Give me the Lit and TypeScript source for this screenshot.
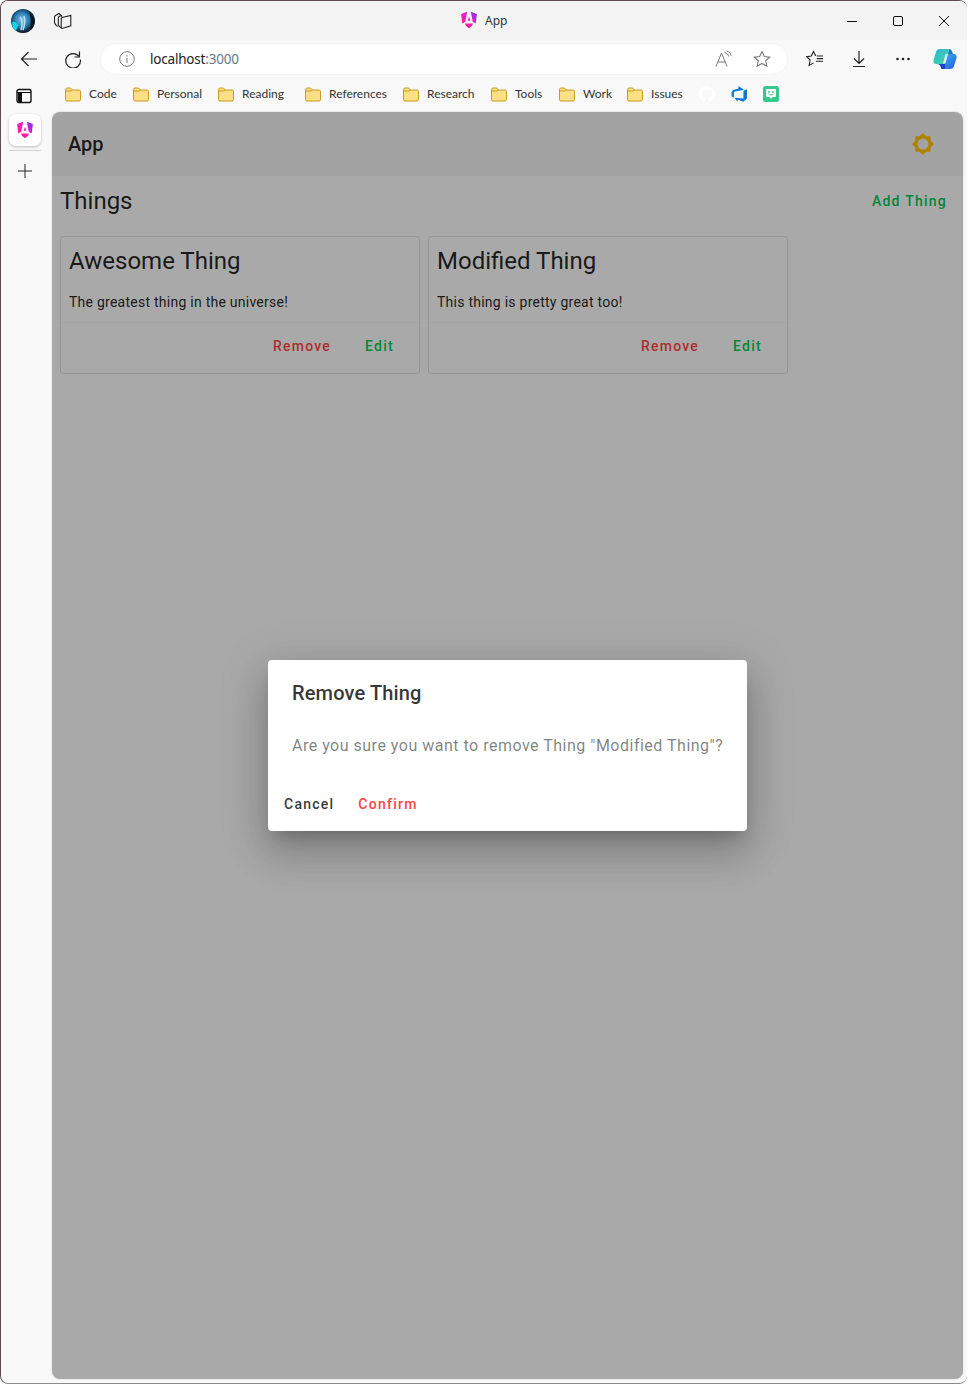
import { LitElement, html, css } from "lit";
import { customElement } from "lit/decorators.js";

const angular = (id: string, size: number) => html`<svg width=${size} height=${size} viewBox="0 0 24 24">
  <defs><linearGradient id=${id} x1="0" y1="1" x2="1" y2="0"><stop offset="0" stop-color="#ff1a5e"/><stop offset=".5" stop-color="#f01fc8"/><stop offset="1" stop-color="#7a2cf0"/></linearGradient></defs>
  <path fill="url(#${id})" d="M9.600 1 1.500 4l1.500 12.500 4-2.200L9.600 1ZM14.400 1 17 14.300l4 2.200L22.500 4 14.400 1ZM12 7.500l-1.900 5.500h3.800L12 7.500ZM6.800 16.500l1 3.200L12 23l4.200-3.300 1-3.200H6.800Z"/>
</svg>`;

const folder = html`<svg class="folder" width="16" height="16" viewBox="0 0 16 16">
  <path d="M.5 3.500A1.500 1.500 0 0 1 2 2h3.500l2 2H14A1.500 1.500 0 0 1 15.500 5.500v8A1.500 1.500 0 0 1 14 15H2A1.500 1.500 0 0 1 .5 13.500Z" fill="#ffdf85" stroke="#c99a1e"/>
  <path d="M.5 5H6l1.500-1" fill="none" stroke="#c99a1e"/>
</svg>`;

const BOOKMARKS = [
  { name: "Code", w: 28 },
  { name: "Personal", w: 45 },
  { name: "Reading", w: 47 },
  { name: "References", w: 58 },
  { name: "Research", w: 48 },
  { name: "Tools", w: 28 },
  { name: "Work", w: 28 },
  { name: "Issues", w: 32 },
];
const THINGS = [
  { title: "Awesome Thing", body: "The greatest thing in the universe!" },
  { title: "Modified Thing", body: "This thing is pretty great too!" },
];

@customElement("app-root")
export class AppRoot extends LitElement {
  static styles = css`
    :host { display: block; width: 968px; height: 1384px; background: #fff; overflow: hidden; font-family: Roboto, sans-serif; }
    * { box-sizing: border-box; }
    svg { display: block; flex: none; }
    .window { position: relative; width: 967px; height: 1384px; display: flex; flex-direction: column; background: #f9f9f9;
      border: solid #5c4c53; border-width: 1px 0 1px 1px; border-bottom-color: #8a8a8a; border-radius: 8px; overflow: hidden; }
    .titlebar { height: 39px; background: #f3f3f3; display: flex; align-items: center; flex: none; position: relative; }
    .avatar { margin-left: 10px; width: 24px; height: 24px; }
    .tabs-ico { margin-left: 19px; }
    .tab { position: absolute; left: 459px; top: 10px; display: flex; align-items: center; gap: 7px; font: 12px "Noto Sans", sans-serif; color: #333; height: 18px; }
    .winbtns { margin-left: auto; display: flex; }
    .winbtns div { width: 46px; display: flex; justify-content: center; }
    .toolbar { height: 38px; display: flex; align-items: center; flex: none; }
    .back { margin-left: 19px; }
    .reload { margin-left: 26px; }
    .url { margin-left: 19px; width: 686px; height: 30px; border-radius: 15px; background: #fff; display: flex; align-items: center; padding-left: 18px; box-shadow: 0 0 2px rgba(0,0,0,.06); }
    .addr { margin-left: 15px; font: 13.500px "Noto Sans", sans-serif; letter-spacing: -.2px; color: #222; }
    .addr span { color: #67788a; }
    .url .aloud { margin-left: auto; }
    .url .star { margin: 0 16px 0 20px; }
    .fav { margin-left: 19px; }
    .dl { margin-left: 26px; }
    .more { margin-left: 26px; }
    .copilot { margin-left: 21px; }
    .lower { flex: 1; display: flex; min-height: 0; }
    .side { width: 51px; flex: none; display: flex; flex-direction: column; align-items: center; padding-top: 10px; }
    .side .panel { margin-left: -5px; }
    .apptab { margin: 10px 0 0 -3px; width: 32px; height: 32px; border-radius: 7px; background: #fff; box-shadow: 0 1px 3px rgba(0,0,0,.25); display: flex; align-items: center; justify-content: center; }
    .divider { margin: 4px 0 0 -3px; width: 32px; height: 1px; background: #d2d2d2; }
    .plus { margin: 12px 0 0 -3px; }
    .right { flex: 1; display: flex; flex-direction: column; min-width: 0; }
    .bookmarks { height: 34px; padding-bottom: 2px; display: flex; align-items: center; flex: none; font: 12px Lato, sans-serif; color: #333; }
    .bm { display: flex; align-items: center; gap: 8px; margin-left: 16px; }
    .bm:first-child { margin-left: 13px; }
    .bm span { padding-bottom: 2px; white-space: nowrap; }
    .apps { display: flex; gap: 16px; margin-left: 16px; }
    .page { position: relative; height: 1267px; width: 911px; border-radius: 8px; background: #fafafa; overflow: hidden; box-shadow: 0 0 2px rgba(0,0,0,.2); }
    .appbar { height: 64px; background: #f0f0f0; padding: 0 16px; display: flex; align-items: center; justify-content: space-between; font-size: 20px; font-weight: 500; color: rgba(0,0,0,.87); }
    .sun { margin-right: 12px; }
    .content { padding: 8px; }
    .head { display: flex; align-items: center; justify-content: space-between; height: 34px; margin-bottom: 18px; }
    .head h1 { margin: 0; font-size: 24px; font-weight: 400; color: rgba(0,0,0,.87); }
    .btn { font: 500 14px Roboto, sans-serif; letter-spacing: 1.250px; background: none; border: 0; padding: 0 8px; height: 36px; color: #00c853; }
    .btn.del { color: #ff4444; }
    .cards { display: flex; gap: 8px; }
    .card { width: 360px; height: 138px; background: #fafafa; border: 1px solid rgba(0,0,0,.12); border-radius: 4px; display: flex; flex-direction: column; }
    .body { padding: 8px; height: 86px; border-bottom: 1px solid rgba(0,0,0,.03); }
    .card h2 { margin: 0; font-size: 24px; font-weight: 400; line-height: 32px; color: rgba(0,0,0,.87); }
    .card p { margin: 15px 0 0; font-size: 14px; line-height: 20px; color: rgba(0,0,0,.87); letter-spacing: .25px; }
    .actions { display: flex; justify-content: flex-end; gap: 18px; padding: 0 17px 4px 0; align-items: center; flex: 1; }
    .scrim { position: absolute; inset: 0; background: rgba(0,0,0,.32); display: flex; align-items: center; justify-content: center; }
    .dialog { width: 479px; height: 171px; background: #fff; border-radius: 4px; box-shadow: 0 11px 15px -7px rgba(0,0,0,.2), 0 24px 38px 3px rgba(0,0,0,.14), 0 9px 46px 8px rgba(0,0,0,.12); display: flex; flex-direction: column; }
    .dialog h3 { margin: 0; padding: 19px 24px 0; font-size: 20px; font-weight: 500; line-height: 28px; letter-spacing: .15px; color: rgba(0,0,0,.8); }
    .dialog p { margin: 0; padding: 27px 24px 0; font-size: 16px; line-height: 24px; letter-spacing: .5px; color: rgba(0,0,0,.5); white-space: nowrap; }
    .dialog .foot { margin-top: auto; display: flex; padding: 0 8px 9px; gap: 8px; }
    .btn.cancel { color: rgba(0,0,0,.8); }
  `;

  render() {
    return html`<div class="window">
      <div class="titlebar">
        <svg class="avatar" viewBox="0 0 24 24">
          <defs><radialGradient id="av" cx=".45" cy=".45" r=".55"><stop offset="0" stop-color="#7cc4ea"/><stop offset=".55" stop-color="#2a7eb5"/><stop offset="1" stop-color="#05101c"/></radialGradient></defs>
          <circle cx="12" cy="12" r="12" fill="url(#av)"/>
          <path d="M1 13c3-1 5 1 6 3l-2 6c-3-2-4-5-4-9Z" fill="#12d5ea"/>
          <path d="M9 8c2 2 3 6 1 13M13 7c1 4 1 9-1 14" stroke="#bfe2ef" stroke-width="1.500" fill="none"/>
          <path d="M18 3c4 3 6 8 5 13l-5 6c3-7 2-13 0-19Z" fill="#08131d"/>
        </svg>
        <svg class="tabs-ico" width="18" height="18" viewBox="0 0 18 18" fill="none" stroke="#222" stroke-width="1.100">
          <path d="M8 4.500 5 1.500 1.500 3.500c-.8.500-1 1-1 2v4.500c0 1 .5 2 1.300 2.800L3.500 14.500"/>
          <path d="M8 3.500 5.500 4.200c-.8.300-1.200.8-1.200 1.700v6c0 1 .5 2 1.300 2.800l1.200 1.300"/>
          <path d="M8 5.500 16.800 3.500v10.300L8 16.500c-.5-.5-.8-1-.8-1.700V6.800c0-.5.300-1 .8-1.300Z"/>
        </svg>
        <div class="tab">${angular("g1", 18)}<span>App</span></div>
        <div class="winbtns">
          <div><svg width="12" height="12" viewBox="0 0 12 12"><path d="M1 6.500h10" stroke="#111" fill="none"/></svg></div>
          <div><svg width="12" height="12" viewBox="0 0 12 12"><rect x="1.500" y="1.500" width="9" height="9" rx="1.500" stroke="#111" fill="none"/></svg></div>
          <div><svg width="12" height="12" viewBox="0 0 12 12"><path d="M1 1l10 10M11 1 1 11" stroke="#111" fill="none"/></svg></div>
        </div>
      </div>
      <div class="toolbar">
        <svg class="back" width="18" height="18" viewBox="0 0 18 18" fill="none" stroke="#222" stroke-width="1.200"><path d="M17 9H1.500M8.500 2 1.500 9l7 7"/></svg>
        <svg class="reload" width="18" height="18" viewBox="0 0 18 18" fill="none" stroke="#222" stroke-width="1.200"><path d="M15 6.500A7.300 7.300 0 1 0 16.300 9.500"/><path d="M15.500 1.500V7H10.500"/></svg>
        <div class="url">
          <svg width="16" height="16" viewBox="0 0 16 16" fill="none" stroke="#777"><circle cx="8" cy="8" r="7.300"/><path d="M8 7v5M8 4.200v1.300"/></svg>
          <div class="addr">localhost<span>:3000</span></div>
          <svg class="aloud" width="18" height="18" viewBox="0 0 18 18" fill="none" stroke="#777" stroke-width="1"><path d="M1 16.500 6.500 3 12 16.500M3 12h7"/><path d="M9.500 1.500c2 .3 3.800 2 4.200 4M11.500 0c2.500.500 4.300 2.500 4.700 4.800" transform="translate(0 1)"/></svg>
          <svg class="star" width="18" height="18" viewBox="0 0 18 18" fill="none" stroke="#777" stroke-width="1.100"><path d="m9 1.500 2.300 5 5.400.6-4 3.700 1.100 5.400L9 13.500l-4.800 2.700 1.100-5.400-4-3.700 5.400-.6Z"/></svg>
        </div>
        <svg class="fav" width="18" height="18" viewBox="0 0 18 18" fill="none" stroke="#222" stroke-width="1.100"><path d="M9.800 6 7.500 1.500 5.300 6 .8 6.700l3.300 3.300-1 5.500 4.400-2.600"/><path d="M10.800 6h6.200M10.800 8.600h6.200M10 11.300h7"/></svg>
        <svg class="dl" width="18" height="18" viewBox="0 0 18 18" fill="none" stroke="#222" stroke-width="1.200"><path d="M9 1v12M4 8.500 9 13.500l5-5M3 16.500h12"/></svg>
        <svg class="more" width="18" height="18" viewBox="0 0 18 18" fill="#222"><circle cx="3.500" cy="9" r="1.300"/><circle cx="9" cy="9" r="1.300"/><circle cx="14.500" cy="9" r="1.300"/></svg>
        <svg class="copilot" width="24" height="24" viewBox="0 0 24 24">
          <defs>
            <linearGradient id="c1" x1="0" y1="0" x2="1" y2="1"><stop offset="0" stop-color="#27b4d8"/><stop offset="1" stop-color="#4dd89a"/></linearGradient>
            <linearGradient id="c2" x1="0" y1="0" x2="1" y2="1"><stop offset="0" stop-color="#35b8f5"/><stop offset="1" stop-color="#2a5ae0"/></linearGradient>
          </defs>
          <path d="M7 2h9l-4 15H3.500C1 17 0 15.500.600 13L3 5c.5-2 2-3 4-3Z" fill="url(#c1)"/>
          <path d="M16 2c1.500 0 2.500 1 3 2.500L20 7h-5Z" fill="#1878b8"/>
          <path d="M13 7h7.500c2.500 0 3.500 1.500 3 4l-2.500 8c-.5 2-2 3-4 3H8c2 0 3-1 3.500-3Z" fill="url(#c2)"/>
          <path d="M12 17H4c3 0 4 3 4.500 5H11c1 0 1.500-2 1-5Z" fill="#2040c8"/>
          <path d="M12.500 7H15l-2.500 9.500H10Z" fill="#fff" opacity=".8"/>
        </svg>
      </div>
      <div class="lower">
        <div class="side">
          <svg class="panel" width="16" height="16" viewBox="0 0 16 16"><rect x="1" y="1.500" width="14" height="13" rx="2" fill="#fff" stroke="#111" stroke-width="1.400"/><path d="M1 4.500h14" stroke="#111"/><path d="M2 5h4v9H3a1 1 0 0 1-1-1Z" fill="#111"/></svg>
          <div class="apptab">${angular("g2", 18)}</div>
          <div class="divider"></div>
          <svg class="plus" width="16" height="16" viewBox="0 0 16 16"><path d="M8 1v14M1 8h14" stroke="#222" fill="none"/></svg>
        </div>
        <div class="right">
          <div class="bookmarks">
            ${BOOKMARKS.map((b) => html`<div class="bm">${folder}<span style="width:${b.w}px">${b.name}</span></div>`)}
            <div class="apps">
              <svg width="16" height="16" viewBox="0 0 16 16"><path fill="#fff" d="M8 0C3.580 0 0 3.580 0 8c0 3.540 2.290 6.530 5.470 7.590.4.070.55-.17.55-.38 0-.19-.01-.82-.01-1.490-2.010.37-2.530-.49-2.690-.94-.09-.23-.48-.94-.82-1.130-.28-.15-.68-.52-.01-.53.63-.01 1.080.58 1.230.82.72 1.210 1.870.87 2.330.66.07-.52.28-.87.51-1.070-1.780-.2-3.640-.89-3.640-3.950 0-.87.31-1.590.82-2.150-.08-.2-.36-1.020.08-2.120 0 0 .67-.21 2.200.82.64-.18 1.320-.27 2-.27.68 0 1.360.09 2 .27 1.530-1.040 2.200-.82 2.200-.82.44 1.100.16 1.920.08 2.120.51.56.82 1.270.82 2.150 0 3.070-1.870 3.750-3.650 3.950.29.25.54.73.54 1.480 0 1.070-.01 1.930-.01 2.200 0 .21.15.46.55.38A8.013 8.013 0 0 0 16 8c0-4.420-3.580-8-8-8Z"/></svg>
              <svg width="16" height="16" viewBox="0 0 16 16"><path d="M16 3.200v9.400l-3.600 3.200-5.800-2.200v2.200L3.400 11.800l9 .7V4.700ZM13 3.700 7.500 0v2.400L2.200 4 .6 6v4.500l2.300 1V5.700Z" fill="#0a78d6"/></svg>
              <svg width="16" height="16" viewBox="0 0 16 16"><rect width="16" height="16" rx="2.500" fill="#35c98e"/><path d="M4 3h8a1 1 0 0 1 1 1v6a1 1 0 0 1-1 1h-2.500L8 13l-1.500-2H4a1 1 0 0 1-1-1V4a1 1 0 0 1 1-1Z" fill="#fff"/><circle cx="6" cy="6" r=".9" fill="#35c98e"/><circle cx="10" cy="6" r=".9" fill="#35c98e"/><path d="M5.500 8c1 1.300 4 1.300 5 0" stroke="#35c98e" fill="none"/></svg>
            </div>
          </div>
          <div class="page">
            <div class="appbar">
              <span>App</span>
              <svg class="sun" width="24" height="24" viewBox="0 0 24 24"><path fill="#ffc107" fill-rule="evenodd" d="M12 1l3.200 3.300h4.500v4.500L23 12l-3.300 3.200v4.500h-4.500L12 23l-3.200-3.300H4.300v-4.500L1 12l3.300-3.200V4.300h4.500ZM12 6.500a5.500 5.500 0 1 0 0 11 5.500 5.500 0 0 0 0-11Z"/></svg>
            </div>
            <div class="content">
              <div class="head"><h1>Things</h1><button class="btn add">Add Thing</button></div>
              <div class="cards">
                ${THINGS.map((t) => html`<div class="card">
                  <div class="body"><h2>${t.title}</h2><p>${t.body}</p></div>
                  <div class="actions"><button class="btn del">Remove</button><button class="btn">Edit</button></div>
                </div>`)}
              </div>
            </div>
            <div class="scrim">
              <div class="dialog">
                <h3>Remove Thing</h3>
                <p>Are you sure you want to remove Thing "Modified Thing"?</p>
                <div class="foot"><button class="btn cancel">Cancel</button><button class="btn del">Confirm</button></div>
              </div>
            </div>
          </div>
        </div>
      </div>
    </div>`;
  }
}
